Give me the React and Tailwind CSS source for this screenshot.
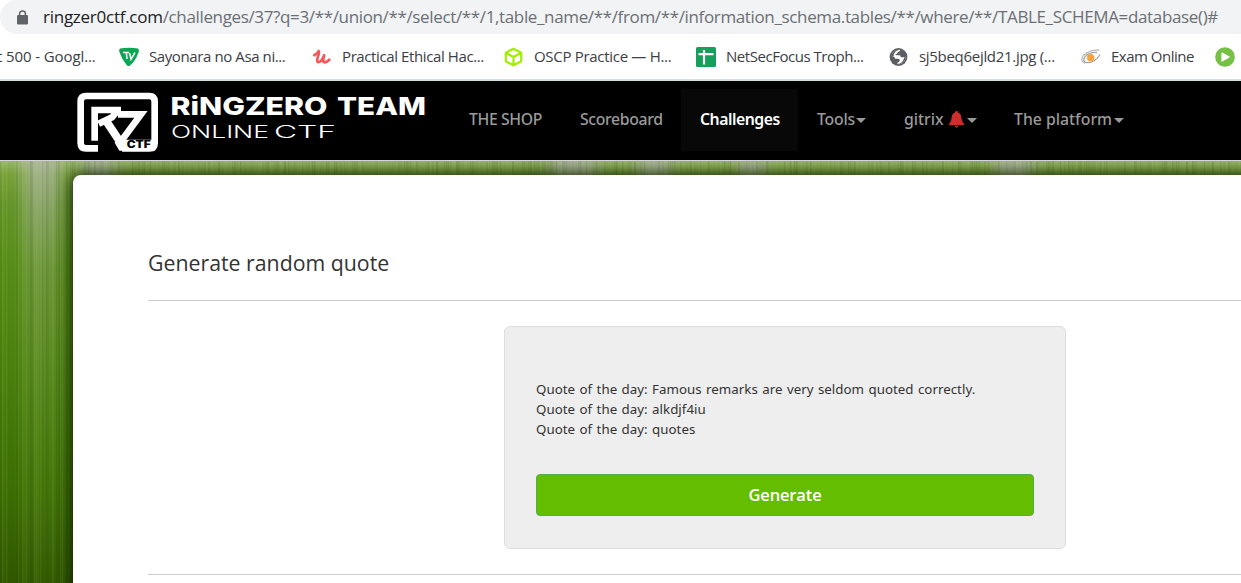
import React from "react";

const bookmarks = [
  { icon: "tv", label: "Sayonara no Asa ni...", cell: "w-[193px]", track: "tracking-[-0.4px]" },
  { icon: "udemy", label: "Practical Ethical Hac...", cell: "w-[192px]", track: "tracking-[-0.39px]" },
  { icon: "cube", label: "OSCP Practice — H...", cell: "w-[192px]", track: "tracking-[-0.3px]" },
  { icon: "sheet", label: "NetSecFocus Troph...", cell: "w-[193px]", track: "tracking-[-0.46px]" },
  { icon: "globe", label: "sj5beq6ejld21.jpg (...", cell: "w-[192px]", track: "tracking-[-0.3px]" },
  { icon: "eye", label: "Exam Online", cell: "w-[134px]", track: "tracking-[-0.5px]" },
  { icon: "play", label: "", cell: "w-[26px]", track: "" },
];

const quotes = ["Famous remarks are very seldom quoted correctly.", "alkdjf4iu", "quotes"];

function Icon({ name }) {
  return (
    <svg className="h-5 w-5 shrink-0" viewBox="0 0 20 20">
      {name === "tv" && (
        <g>
          <path d="M1 1.5Q10 .2 19 1.5Q20.500 3 19.500 5.500Q16.500 14 11 18.500Q9.500 19.600 8 18.500Q3 13 .4 5Q-.2 2.500 1 1.500Z" fill="#0aa653" />
          <path d="M4 5.500H10M7.300 5.500L8 12M10.500 6L12 12.300L16 5.500" fill="none" stroke="#fff" strokeWidth="1.500" />
        </g>
      )}
      {name === "udemy" && (
        <path d="M2.200 8.200Q5.500 6.400 6.700 4Q7.500 5 6.200 8.700Q4.200 15 6.300 15.200Q9.300 15.200 12.200 8.200Q10 15.500 13 15.300Q15.200 15 17.300 12.800" fill="none" stroke="#f1595b" strokeWidth="2.700" strokeLinecap="round" strokeLinejoin="round" />
      )}
      {name === "cube" && (
        <path d="M9.500 1.700L17.200 5.700V14.300L9.500 18.300L1.800 14.300V5.700ZM2.300 6L9.500 10L16.700 6M9.500 10V17.500" fill="none" stroke="#9fef00" strokeWidth="2.200" strokeLinejoin="round" />
      )}
      {name === "sheet" && (
        <g>
          <rect width="20" height="20" rx="1.500" fill="#14a05a" />
          <path d="M2.500 7.200H17.500M8 3V17.500" stroke="#fff" strokeWidth="2.200" />
        </g>
      )}
      {name === "globe" && (
        <g transform="translate(-.5 0)">
          <circle cx="10" cy="10" r="8.900" fill="#5a5e63" />
          <path d="M11.800 2.800Q11.700 4.700 9.300 5.200Q8.700 7 7 7.500Q6.800 8.300 8.200 8.300H11.200Q12.300 8.500 12.200 10.200H15Q16.800 10 16.900 9.200Q17.500 13.700 13.500 16.200Q11.300 17.300 8.900 17.100V15.700Q11.300 15.200 11.300 13.300Q11.200 11.900 9.300 11.800H6.800Q6.500 9.800 3.200 9Q3.400 5.500 6.700 3.700Q9 2.500 11.800 2.800Z" fill="#fff" />
          <path d="M3.200 9Q3.400 5.500 6.700 3.700Q9 2.500 11.800 2.800Q8 3 5.800 6.200Q4.900 8 5.300 9.600ZM8.900 17.100Q14 16.500 15.200 12Q15.200 11 16.900 9.200Q17.500 13.700 13.500 16.200Q11.300 17.300 8.900 17.100Z" fill="#5a5e63" />
        </g>
      )}
      {name === "eye" && (
        <g fill="none">
          <path d="M18.500 3.200Q8 2.500 2.500 8.500Q-1.500 14 4 16.500" stroke="#b5b5b5" strokeWidth="1.200" />
          <path d="M16 5.500Q8 5 4 9.800Q.5 14.800 6 15.700Q14 16 19 7.500" stroke="#a2a2a2" strokeWidth="1.300" />
          <circle cx="9.700" cy="10.700" r="3.700" fill="#f9a13a" />
        </g>
      )}
      {name === "play" && (
        <g>
          <circle cx="10" cy="10" r="9.800" fill="#76c043" />
          <path d="M7 6L14.200 10L7 14Z" fill="#fff" stroke="#fff" strokeWidth="1.200" strokeLinejoin="round" />
        </g>
      )}
    </svg>
  );
}

function AddressBar() {
  return (
    <div className="flex h-[34px] items-center rounded-l-full bg-[#f1f3f4] pl-[17px]">
      <svg className="h-[15px] w-[11px] shrink-0" viewBox="0 0 11 15">
        <rect y="5" width="11" height="9.500" rx="1.300" fill="#5f6368" />
        <path d="M2.600 6V3.700Q2.600 1 5.500 1T8.400 3.700V6" fill="none" stroke="#5f6368" strokeWidth="1.500" />
      </svg>
      <p className="ml-[15px] whitespace-nowrap text-[17px] leading-[34px] tracking-[-0.357px] text-[#6b6f74]">
        <span className="tracking-[-0.26px] text-[#202124]">ringzer0ctf.com</span>
        {"/challenges/37?q=3/**/union/**/select/**/1,table_name/**/from/**/information_schema.tables/**/where/**/TABLE_SCHEMA=database()#"}
      </p>
    </div>
  );
}

function BookmarksBar() {
  return (
    <div className="flex h-[47px] items-center border-b-2 border-[#d9dee0] text-[15px] text-[#3c4043]">
      <div className="flex w-[119px] shrink-0 whitespace-nowrap tracking-[-0.1px]">
        <span className="-ml-[3px]">t 500 - Googl...</span>
      </div>
      {bookmarks.map((b) => (
        <div key={b.icon} className={"flex shrink-0 items-center gap-[10px] whitespace-nowrap " + b.cell}>
          <Icon name={b.icon} />
          <span className={b.track}>{b.label}</span>
        </div>
      ))}
    </div>
  );
}

function Logo() {
  return (
    <svg className="mt-[3px] h-[68px] w-[362px] shrink-0" viewBox="0 0 362 68">
      <g transform="scale(.33333)" fill="none" stroke="#fff">
        <path d="M78 181H42Q26 181 26 165V40Q26 24 42 24H232Q248 24 248 40V165Q248 181 232 181H150" strokeWidth="20" />
        <path d="M68 158V66H147" strokeWidth="20" />
        <path d="M140 64L120 88L80 107" strokeWidth="20" />
        <path d="M102 98L150 170" strokeWidth="24" />
        <path d="M138 79H207L144 164" strokeWidth="20" />
        <path d="M124 166L138 158L158 155H248V188H142L128 164Z" fill="#fff" stroke="none" />
        <text x="164" y="180" textLength="72" lengthAdjust="spacingAndGlyphs" fill="#000" stroke="none" className="font-['Inter',sans-serif] text-[29px] font-black">CTF</text>
      </g>
      <g fill="#fff" className="font-['Inter',sans-serif]">
        <text x="98.500" y="27" textLength="157" lengthAdjust="spacingAndGlyphs" className="text-[25px] font-extrabold">RiNGZERO</text>
        <text x="265" y="27" textLength="89" lengthAdjust="spacingAndGlyphs" className="text-[25px] font-extrabold">TEAM</text>
        <text x="99" y="49.500" textLength="98" lengthAdjust="spacingAndGlyphs" className="text-[17px] font-light">ONLINE</text>
        <text x="202" y="49.500" textLength="62" lengthAdjust="spacingAndGlyphs" className="text-[17px] font-light">CTF</text>
      </g>
    </svg>
  );
}

function Caret() {
  return (
    <svg className="mt-[2px] h-[5px] w-[10px] shrink-0" viewBox="0 0 10 5">
      <path d="M0 0H10L5 5Z" fill="#999" />
    </svg>
  );
}

function Bell() {
  return (
    <svg className="ml-[5px] mr-[3px] h-[17px] w-[15px] shrink-0" viewBox="0 0 15 17">
      <path d="M7.500 0Q9 0 9 1.400Q12.200 2.500 12.400 7Q12.500 10.500 15 13.200V14H0V13.200Q2.500 10.500 2.600 7Q2.800 2.500 6 1.400Q6 0 7.500 0ZM6 15H9Q8.800 16.700 7.500 16.700T6 15Z" fill="#cc2f2b" />
    </svg>
  );
}

function Navbar() {
  return (
    <header className="flex h-[80px] items-center border-b border-[#d6d3d6] bg-black pl-[72px]">
      <Logo />
      <nav className="mb-[2px] ml-[16px] flex h-[62px] whitespace-nowrap font-['Noto_Sans','Open_Sans',sans-serif] text-[15.800px] font-medium text-[#9a9a9a]">
        <a className="flex w-[111px] items-center pl-[19px] tracking-[-0.4px]">THE SHOP</a>
        <a className="flex w-[120px] items-center pl-[19px] tracking-[-0.35px]">Scoreboard</a>
        <a className="flex w-[117px] items-center bg-[#080808] pl-[19px] font-semibold tracking-[-0.48px] text-white">Challenges</a>
        <a className="flex w-[87px] items-center gap-[1px] pl-[19px] tracking-[-0.2px]">Tools<Caret /></a>
        <a className="flex w-[110px] items-center pl-[19px]">gitrix<Bell /><Caret /></a>
        <a className="flex w-[147px] items-center gap-[2px] pl-[19px] tracking-[0px]">The platform<Caret /></a>
      </nav>
    </header>
  );
}

// Deterministic noise keeps the brushed backdrop stable between renders.
function noise(i) {
  const v = Math.sin(i * 127.1 + 3.7) * 43758.5453;
  return v - Math.floor(v);
}

const glows = [[42, 18], [99, 14], [574, 22], [655, 16], [752, 12], [1014, 18]];

function Backdrop() {
  return (
    <svg className="absolute inset-0 h-full w-full" viewBox="0 0 1241 422" preserveAspectRatio="none">
      <defs>
        <linearGradient id="base" x1="0" y1="0" x2="0" y2="1">
          <stop offset="0" stopColor="#9cb870" />
          <stop offset=".03" stopColor="#7aa43c" />
          <stop offset=".1" stopColor="#65962a" />
          <stop offset=".25" stopColor="#578e16" />
          <stop offset=".5" stopColor="#4a810d" />
          <stop offset=".8" stopColor="#3c6d04" />
          <stop offset="1" stopColor="#305800" />
        </linearGradient>
        <linearGradient id="fade" x1="0" y1="0" x2="0" y2="1">
          <stop offset="0" stopColor="#b4b8ac" stopOpacity=".75" />
          <stop offset=".25" stopColor="#98aa7c" stopOpacity=".4" />
          <stop offset=".75" stopColor="#6a982c" stopOpacity=".2" />
          <stop offset="1" stopColor="#6a982c" stopOpacity=".05" />
        </linearGradient>
        <filter id="soft" x="-60%" width="220%"><feGaussianBlur stdDeviation="8 0" /></filter>
      </defs>
      <rect width="1241" height="422" fill="url(#base)" />
      {glows.map(([x, r]) => (
        <rect key={x} x={x - r} width={r * 2} height="422" fill="url(#fade)" filter="url(#soft)" />
      ))}
      {Array.from({ length: 620 }, (_, i) => (
        <rect key={i} x={i * 2} width={1 + noise(i + 900)} height="422" fill={noise(i) > 0.5 ? "#cfe89a" : "#173000"} opacity={noise(i + 77) * 0.12} />
      ))}
    </svg>
  );
}

export default function App() {
  return (
    <div className="flex h-[583px] w-full flex-col overflow-hidden bg-white font-['Open_Sans','Noto_Sans',sans-serif]">
      <AddressBar />
      <BookmarksBar />
      <Navbar />
      <main className="relative flex-1 overflow-hidden pl-[73px] pt-[14px]">
        <Backdrop />
        <section className="relative h-[440px] w-[1424px] rounded-lg bg-white px-[75px] pt-[72px] shadow-[0_0_16px_1px_#0d1c00] text-[#333]">
          <h1 className="h-[53px] text-[21.300px] leading-[32px]">Generate random quote</h1>
          <hr className="border-[#ccc]" />
          <div className="mx-auto mt-[25px] flex h-[223px] w-[562px] flex-col rounded-md border border-[#ddd] bg-[#eee] px-[31px] pt-[52px]">
            <div className="font-['Noto_Sans','Open_Sans',sans-serif] text-[13.300px] leading-[20px] tracking-[0.03px] [word-spacing:0.9px]">
              {quotes.map((q) => (
                <p key={q}>Quote of the day: {q}</p>
              ))}
            </div>
            <button className="mt-[35px] h-[42px] w-[498px] rounded border border-[#4cae4c] bg-[#65bd00] text-[16.500px] font-semibold tracking-[-0.15px] text-white">Generate</button>
          </div>
          <hr className="mt-[25px] border-[#ccc]" />
        </section>
      </main>
    </div>
  );
}
